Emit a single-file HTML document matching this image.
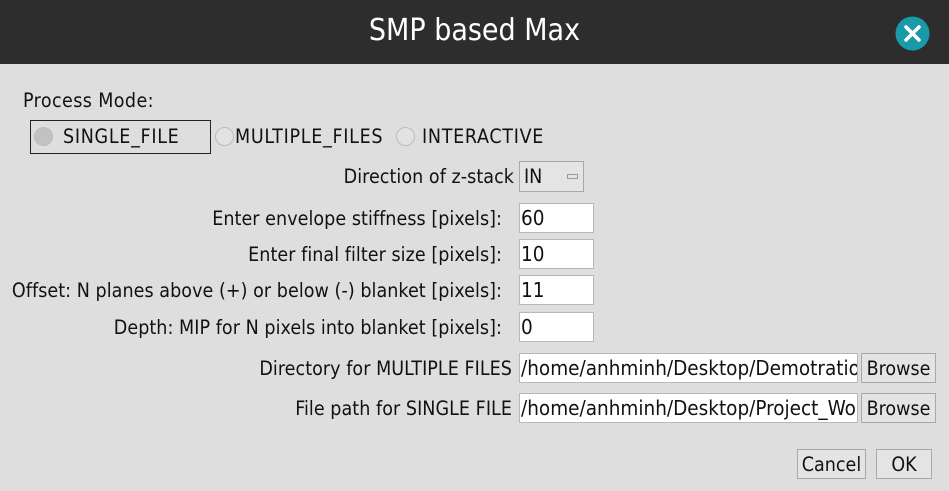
<!DOCTYPE html><html><head><style>
body{margin:0;width:949px;height:491px;background:#dedede;font-family:"DejaVu Sans Condensed","Liberation Sans",sans-serif;font-size:19.5px;color:#111;position:relative;overflow:hidden}
.a{position:absolute;white-space:nowrap}
.t{position:absolute;background:#fff;border:1px solid #b8b8b8;box-sizing:border-box;padding-left:1px;line-height:29px;overflow:hidden;white-space:nowrap;font-size:20.5px}
.b{position:absolute;background:#e4e4e4;border:1px solid #a8a8a8;box-sizing:border-box;text-align:center;line-height:29px;overflow:hidden}
.r{position:absolute;width:19px;height:19px;border-radius:50%;border:1px solid #bbb;box-sizing:border-box;background:#e2e2e2}
.l{position:absolute;right:447px;white-space:nowrap;line-height:31px;letter-spacing:.05px}
.s{letter-spacing:.7px}
</style></head><body>
<div class="a" style="left:0;top:0;width:949px;height:64px;background:#2d2d2d"></div>
<div class="a" style="left:0;top:13px;width:949px;text-align:center;color:#fff;font-size:30px">SMP based Max</div>
<svg class="a" style="left:895px;top:16px" width="35" height="35"><circle cx="17.5" cy="17.5" r="17" fill="#1a9aa8"/><path d="M11 11L24 24M24 11L11 24" stroke="#fff" stroke-width="3.5" stroke-linecap="round"/></svg>
<div class="a s" style="left:23px;top:89px;letter-spacing:.4px">Process Mode:</div>
<div class="a" style="left:30px;top:120px;width:181px;height:34px;border:1px solid #222;box-sizing:border-box"></div>
<div class="r" style="left:34px;top:127px;background:#c2c2c2"></div>
<div class="a s" style="left:63px;top:125px">SINGLE_FILE</div>
<div class="r" style="left:215px;top:127px"></div>
<div class="a s" style="left:235px;top:125px">MULTIPLE_FILES</div>
<div class="r" style="left:396px;top:127px"></div>
<div class="a s" style="left:422px;top:125px">INTERACTIVE</div>
<div class="l" style="top:161px;right:435px">Direction of z-stack</div>
<div class="b" style="left:519px;top:161px;width:65px;height:31px;text-align:left;padding-left:4px">IN<span style="position:absolute;left:47px;top:12px;width:11px;height:5px;border:1px solid #999;box-sizing:border-box"></span></div>
<div class="l" style="top:203px">Enter envelope stiffness [pixels]:</div><div class="t" style="left:519px;top:203px;width:75px;height:30px">60</div>
<div class="l" style="top:239px">Enter final filter size [pixels]:</div><div class="t" style="left:519px;top:239px;width:75px;height:30px">10</div>
<div class="l" style="top:275px">Offset: N planes above (+) or below (-) blanket [pixels]:</div><div class="t" style="left:519px;top:275px;width:75px;height:30px">11</div>
<div class="l" style="top:312px">Depth: MIP for N pixels into blanket [pixels]:</div><div class="t" style="left:519px;top:312px;width:75px;height:30px">0</div>
<div class="l" style="top:353px;right:437px">Directory for MULTIPLE FILES</div><div class="t" style="left:519px;top:353px;width:339px;height:30px">/home/anhminh/Desktop/Demotration</div>
<div class="b" style="left:861px;top:353px;width:75px;height:30px">Browse</div>
<div class="l" style="top:393px;right:437px">File path for SINGLE FILE</div><div class="t" style="left:519px;top:393px;width:339px;height:30px">/home/anhminh/Desktop/Project_Work</div>
<div class="b" style="left:861px;top:393px;width:75px;height:30px">Browse</div>
<div class="b" style="left:797px;top:449px;width:69px;height:30px">Cancel</div>
<div class="b" style="left:876px;top:449px;width:56px;height:30px">OK</div>
</body></html>
